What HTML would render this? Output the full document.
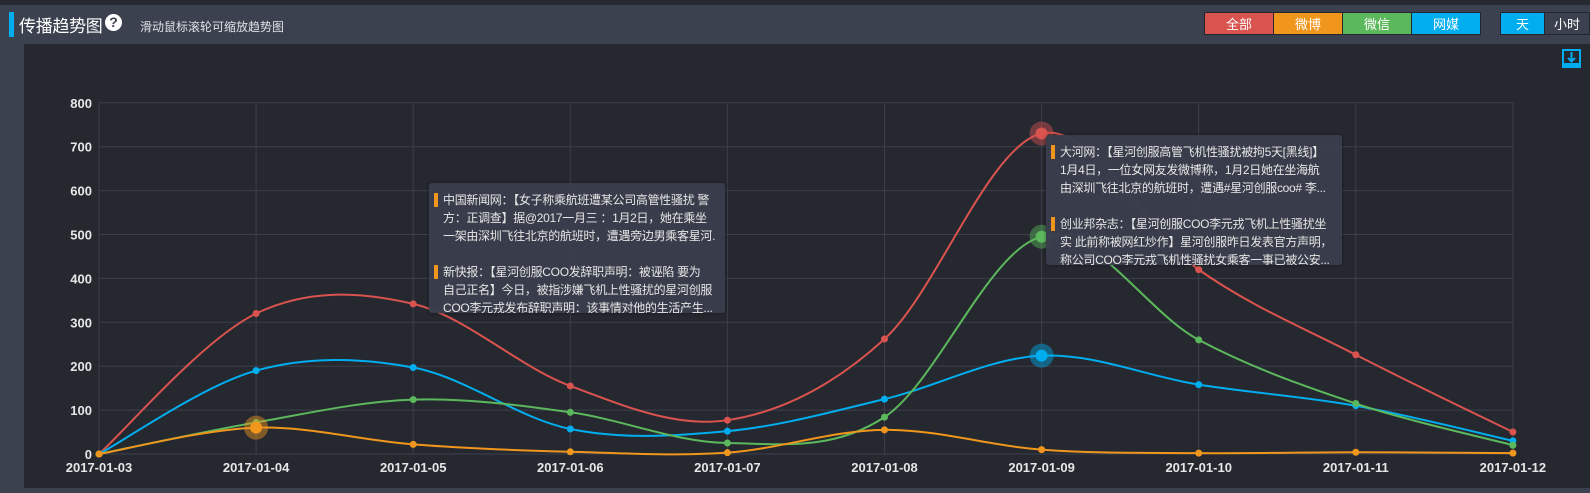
<!DOCTYPE html>
<html><head><meta charset="utf-8"><style>
body{margin:0;width:1590px;height:493px;background:#3c414f;font-family:"Liberation Sans","Noto Sans CJK SC",sans-serif;position:relative;overflow:hidden;color:#fff}
.top{position:absolute;left:0;top:0;width:1590px;height:5px;background:#272a33}
.bar{position:absolute;left:9px;top:12px;width:5px;height:25px;background:#00aeef}
.title{position:absolute;left:19px;top:12px;font-size:17px;color:#fff;letter-spacing:-0.3px}
.q{position:absolute;left:105px;top:14px;width:17px;height:17px;border-radius:50%;background:#fff;color:#3c414f;font-weight:bold;font-size:14px;text-align:center;line-height:17px}
.sub{position:absolute;left:140px;top:18px;font-size:12px;color:#dfe1e6}
.btn{position:absolute;top:12px;height:23px;line-height:23px;text-align:center;font-size:13px;color:#fff;border:1px solid #23262e;box-sizing:border-box}
.chart{position:absolute;left:24px;top:44px;width:1566px;height:444px;background:#262830}
.tip{position:absolute;background:rgba(58,62,76,.97);border-radius:3px;font-size:12px;line-height:18px;color:#e6e6e6;padding:8px 4px 6px 14px;box-sizing:border-box;box-shadow:0 0 3px rgba(0,0,0,.4);white-space:nowrap;overflow:hidden;letter-spacing:-0.3px}
.tip p{margin:0 0 18px;position:relative}
.tip p:last-child{margin:0}
.tip p:before{content:"";position:absolute;left:-9px;top:2px;width:4px;height:14px;background:#f0961c}
</style></head><body>
<div class="top"></div>
<div class="bar"></div>
<div class="title">传播趋势图</div>
<div class="q">?</div>
<div class="sub">滑动鼠标滚轮可缩放趋势图</div>
<div class="btn" style="left:1204px;width:70px;background:#d9534f">全部</div>
<div class="btn" style="left:1273px;width:70px;background:#f0961c">微博</div>
<div class="btn" style="left:1342px;width:70px;background:#5cb85c">微信</div>
<div class="btn" style="left:1411px;width:70px;background:#00aeef">网媒</div>
<div class="btn" style="left:1500px;width:45px;background:#00aeef">天</div>
<div class="btn" style="left:1544px;width:46px;background:#3c414f">小时</div>
<div class="chart"></div>
<svg width="1590" height="493" style="position:absolute;left:0;top:0" id="s">
<rect x="1563" y="50" width="17" height="17" fill="none" stroke="#00aeef" stroke-width="2"/>
<path d="M1571.5 52 v9 M1568 58 l3.5 3.5 l3.5 -3.5" stroke="#00aeef" stroke-width="2" fill="none"/>
<rect x="1563" y="63" width="17" height="5" fill="#00aeef"/>
</svg>
<div class="tip" style="left:429px;top:183px;width:296px;height:130px">
<p>中国新闻网：【女子称乘航班遭某公司高管性骚扰 警<br>方：正调查】据@2017一月三 ：1月2日，她在乘坐<br>一架由深圳飞往北京的航班时，遭遇旁边男乘客星河.</p>
<p>新快报：【星河创服COO发辞职声明：被诬陷 要为<br>自己正名】今日，被指涉嫌飞机上性骚扰的星河创服<br>COO李元戎发布辞职声明：该事情对他的生活产生...</p>
</div>
<div class="tip" style="left:1046px;top:135px;width:296px;height:130px">
<p>大河网：【星河创服高管飞机性骚扰被拘5天[黑线]】<br>1月4日，一位女网友发微博称，1月2日她在坐海航<br>由深圳飞往北京的航班时，遭遇#星河创服coo# 李...</p>
<p>创业邦杂志：【星河创服COO李元戎飞机上性骚扰坐<br>实 此前称被网红炒作】星河创服昨日发表官方声明，<br>称公司COO李元戎飞机性骚扰女乘客一事已被公安...</p>
</div>
<script>
var s=document.getElementById('s'),h='';
var X=i=>99+i*157.1,Y=v=>454-v*0.439;
for(var v=0;v<=800;v+=100)h+=`<line x1="99" x2="1513" y1="${Y(v)}" y2="${Y(v)}" stroke="#3c3f4b"/><text x="92" y="${Y(v)+5}" text-anchor="end" font-size="13" font-weight="bold" fill="#e6e6e6">${v}</text>`;
var d=['2017-01-03','2017-01-04','2017-01-05','2017-01-06','2017-01-07','2017-01-08','2017-01-09','2017-01-10','2017-01-11','2017-01-12'];
d.forEach((t,i)=>{h+=`<line x1="${X(i)}" x2="${X(i)}" y1="103" y2="454" stroke="#3c3f4b"/><text x="${X(i)}" y="472" text-anchor="middle" font-size="13" font-weight="bold" fill="#e6e6e6">${t}</text>`});
var ser=[['#d9534f',[0,320,342,155,77,262,730,420,226,50],6],['#00aeef',[0,190,197,57,52,125,224,158,110,30],6],['#5cb85c',[0,72,124,95,25,84,495,260,115,20],6],['#f0961c',[0,60,22,5,3,55,10,2,4,2],1]];
ser.forEach(([c,a,hi])=>{var p=a.map((v,i)=>[X(i),Y(v)]),path='M'+p[0];
for(var i=0;i<p.length-1;i++){var p0=p[i-1]||p[i],p1=p[i],p2=p[i+1],p3=p[i+2]||p2;
path+=`C${p1[0]+(p2[0]-p0[0])/6},${p1[1]+(p2[1]-p0[1])/6} ${p2[0]-(p3[0]-p1[0])/6},${p2[1]-(p3[1]-p1[1])/6} ${p2[0]},${p2[1]}`}
h+=`<path d="${path}" fill="none" stroke="${c}" stroke-width="2"/>`;
p.forEach((q,i)=>{if(i==hi)h+=`<circle cx="${q[0]}" cy="${q[1]}" r="12" fill="${c}" opacity=".45"/><circle cx="${q[0]}" cy="${q[1]}" r="6" fill="${c}"/>`;else h+=`<circle cx="${q[0]}" cy="${q[1]}" r="3.5" fill="${c}"/>`;});});
s.insertAdjacentHTML('afterbegin',h);
</script>
</body></html>
